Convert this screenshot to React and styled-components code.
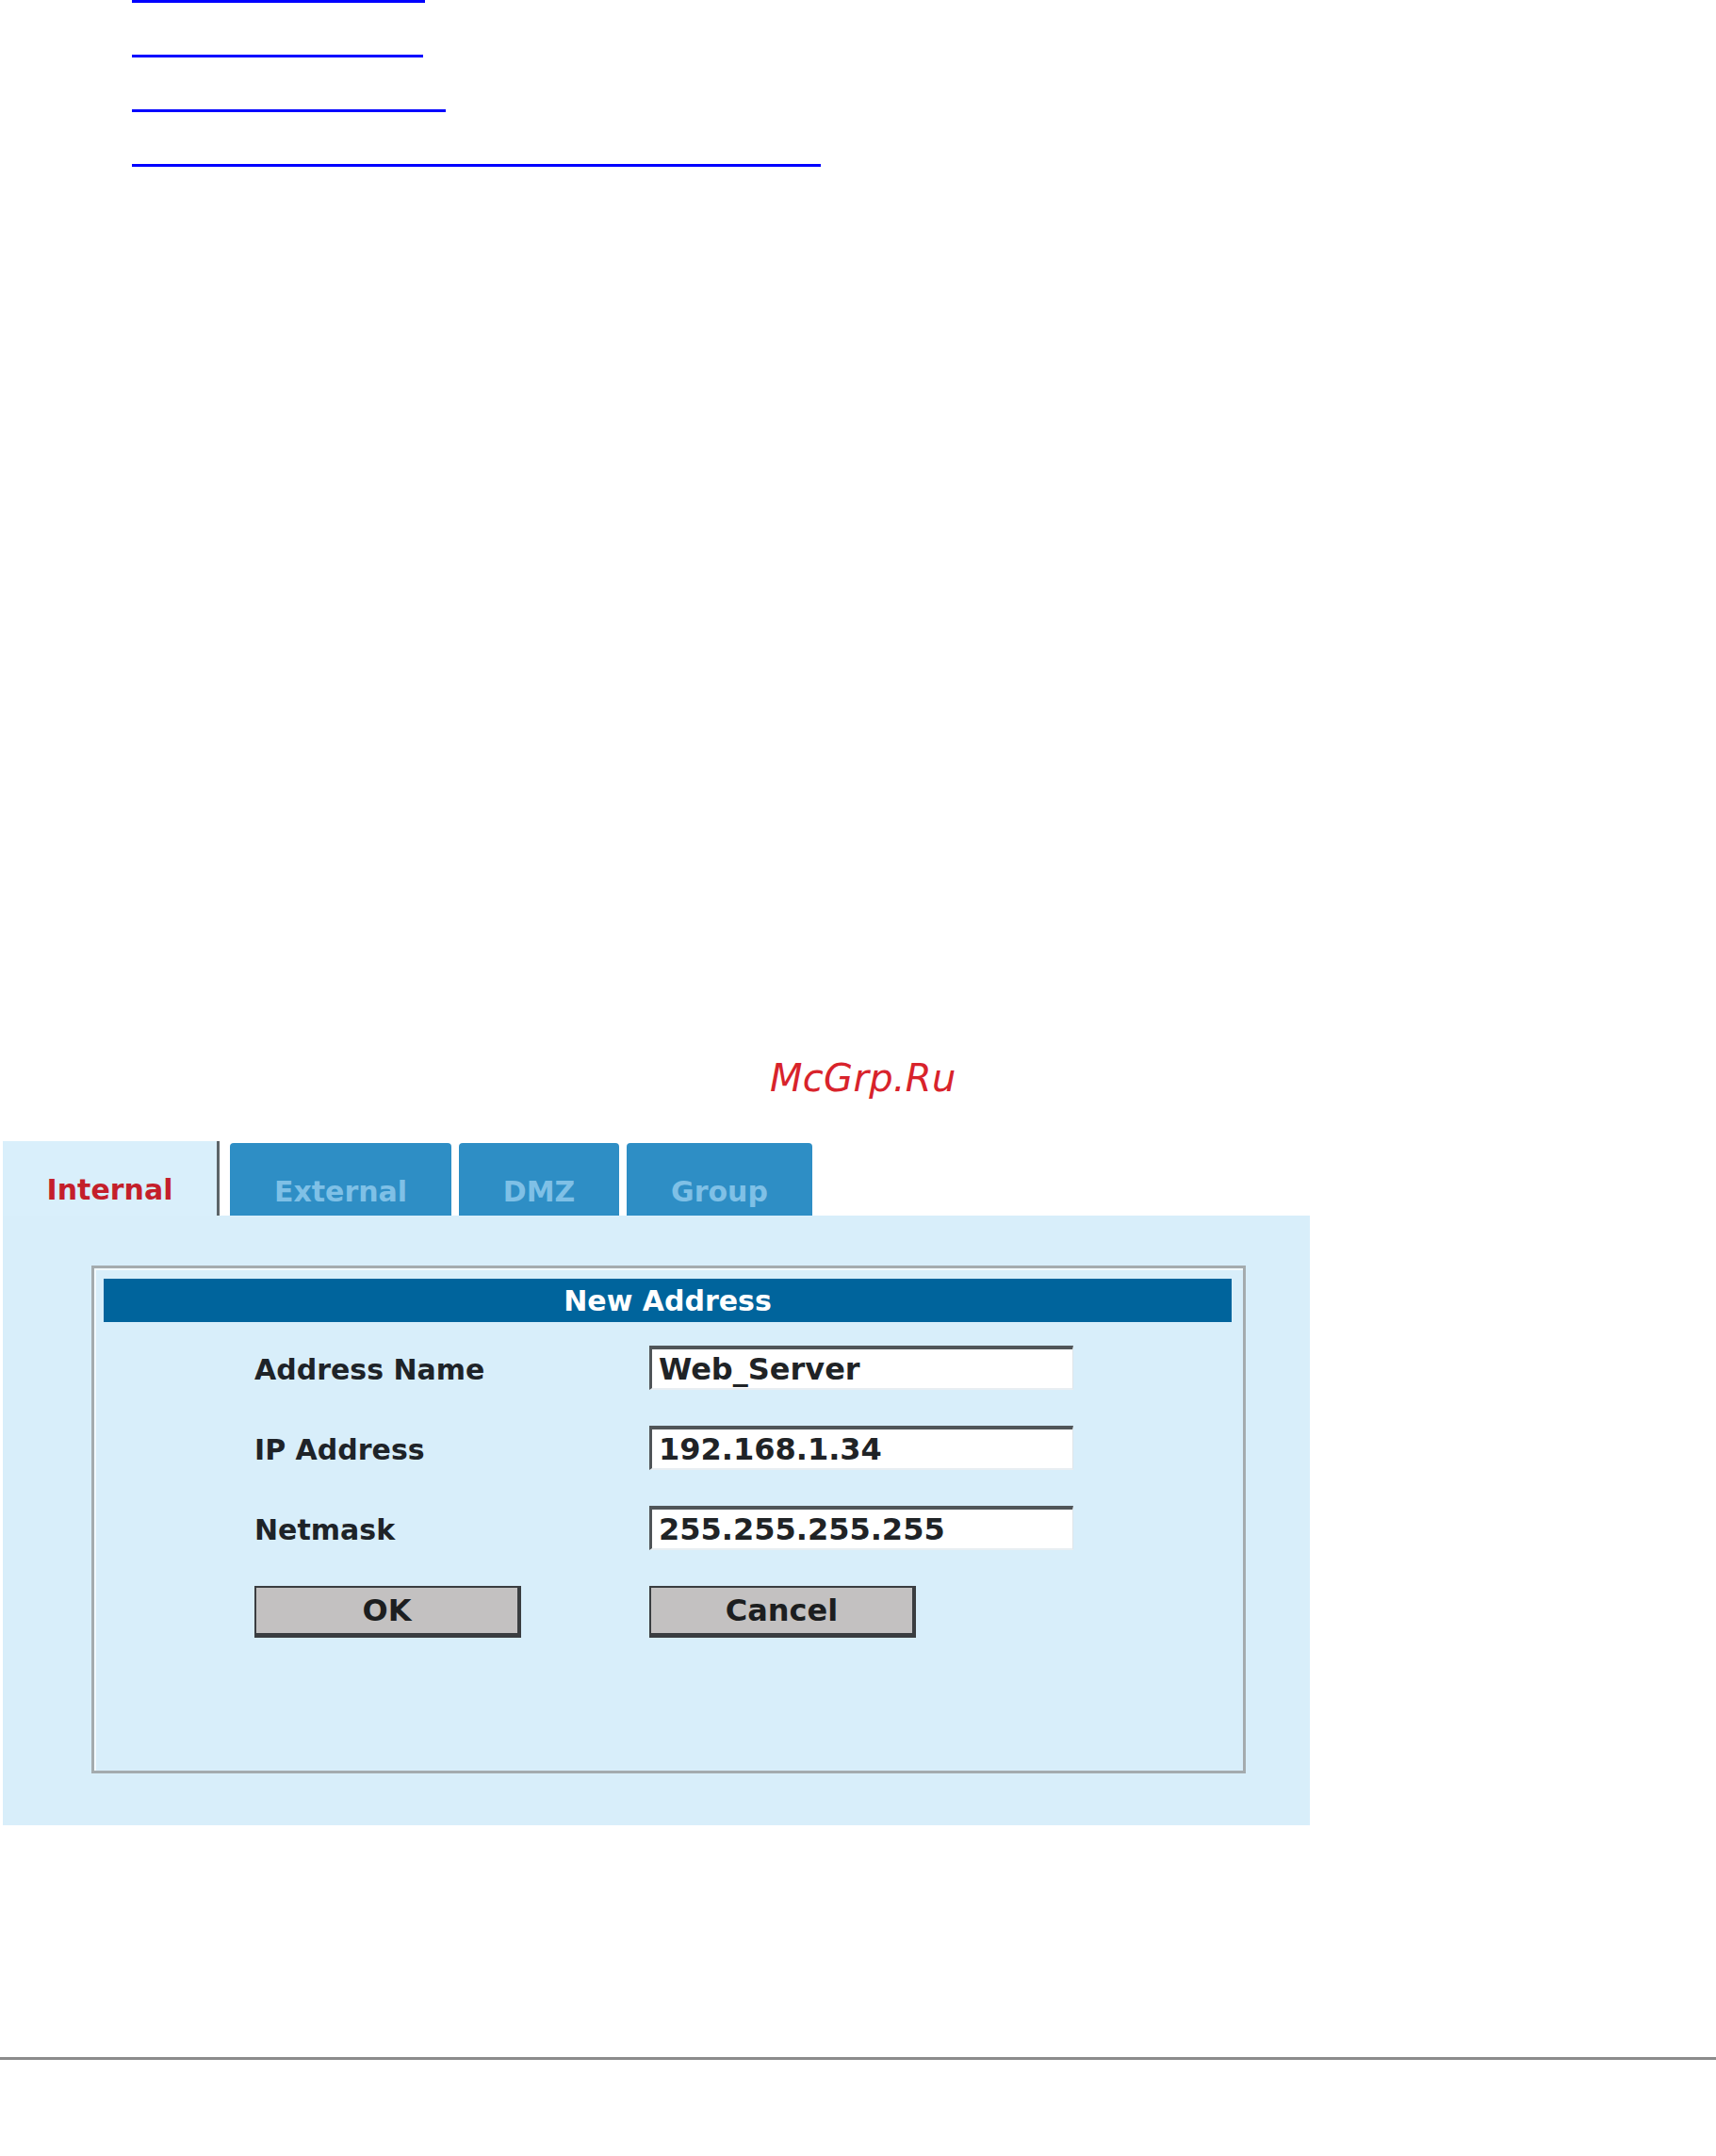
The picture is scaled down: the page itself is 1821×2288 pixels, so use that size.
import styled, { createGlobalStyle } from "styled-components";

const GlobalStyle = createGlobalStyle`
    body {
        margin: 0;
        background: #ffffff;
        font-family: "DejaVu Sans", Verdana, sans-serif;
    }
`;

const links = [
    { href: "#internal", width: 311 },
    { href: "#external", width: 309 },
    { href: "#dmz", width: 333 },
    { href: "#new-address", width: 731 },
];

const tabs = [
    { label: "Internal", width: 230, active: true },
    { label: "External", width: 235, gap: 11 },
    { label: "DMZ", width: 170, gap: 8 },
    { label: "Group", width: 197, gap: 8 },
];

const fields = [
    { label: "Address Name", value: "Web_Server" },
    { label: "IP Address", value: "192.168.1.34" },
    { label: "Netmask", value: "255.255.255.255" },
];

const App = () => {
    return (
        <Page>
            <GlobalStyle />
            <LinkList>
                {links.map((l) => (
                    <NavLink key={l.href} href={l.href} $w={l.width} aria-label={l.href.slice(1)} />
                ))}
            </LinkList>

            <Watermark>McGrp.Ru</Watermark>

            <TabPanel>
                <TabRow>
                    {tabs.map((t) => (
                        <Tab key={t.label} $active={t.active} $w={t.width} $gap={t.gap || 0}>
                            {t.label}
                        </Tab>
                    ))}
                </TabRow>
                <PanelBody>
                    <GroupBox>
                        <Header>New Address</Header>
                        <Form>
                            {fields.map((f) => (
                                <Field key={f.label}>
                                    <Label>{f.label}</Label>
                                    <Input readOnly defaultValue={f.value} />
                                </Field>
                            ))}
                            <Field>
                                <Button>OK</Button>
                                <Button>Cancel</Button>
                            </Field>
                        </Form>
                    </GroupBox>
                </PanelBody>
            </TabPanel>

            <Rule />
        </Page>
    );
}

const Page = styled.div`
    width: 1821px;
    min-height: 2288px;
    overflow: hidden;
`;

const LinkList = styled.div`
    display: flex;
    flex-direction: column;
    align-items: flex-start;
    gap: 55px;
    padding-left: 140px;
`;

const NavLink = styled.a`
    display: block;
    width: ${(p) => p.$w}px;
    height: 0;
    border-bottom: 3px solid #0000ff;
`;

const Watermark = styled.div`
    margin-top: 947px;
    padding-left: 817px;
    font-size: 40px;
    line-height: 40px;
    font-style: italic;
    color: #d8232b;
    letter-spacing: 0.3px;
`;

const TabPanel = styled.div`
    margin-top: 47px;
    margin-left: 3px;
    width: 1387px;
`;

const TabRow = styled.div`
    display: flex;
    height: 79px;
`;

const Tab = styled.div`
    box-sizing: border-box;
    width: ${(p) => p.$w}px;
    margin-left: ${(p) => p.$gap}px;
    display: flex;
    justify-content: center;
    padding-top: 24px;
    font-size: 30px;
    line-height: 55px;
    font-weight: bold;
    background: ${(p) => (p.$active ? "#d9effb" : "#2e8ec5")};
    color: ${(p) => (p.$active ? "#c41f2b" : "#7fc0e6")};
    border-right: ${(p) => (p.$active ? "3px solid #5c6468" : "none")};
    border-radius: ${(p) => (p.$active ? "0" : "4px 4px 0 0")};
    margin-top: ${(p) => (p.$active ? "0" : "2px")};
`;

const PanelBody = styled.div`
    box-sizing: border-box;
    height: 647px;
    background: #d8eefa;
    padding: 53px 68px 0 94px;
`;

const GroupBox = styled.div`
    box-sizing: border-box;
    height: 539px;
    border: 3px solid #a4abae;
    box-shadow: inset 2px 2px 0 #f2faff;
    padding: 11px 12px 0 10px;
`;

const Header = styled.div`
    height: 46px;
    background: #00649c;
    color: #ffffff;
    font-size: 30px;
    font-weight: bold;
    display: flex;
    align-items: center;
    justify-content: center;
`;

const Form = styled.div`
    display: flex;
    flex-direction: column;
    gap: 38px;
    margin-top: 25px;
    padding-left: 160px;
`;

const Field = styled.div`
    display: grid;
    grid-template-columns: 419px 450px;
    align-items: center;
`;

const Label = styled.span`
    font-size: 30px;
    font-weight: bold;
    color: #1e2328;
    padding-top: 4px;
`;

const Input = styled.input`
    box-sizing: border-box;
    width: 450px;
    height: 47px;
    margin: 0;
    padding: 0 7px;
    background: #ffffff;
    border-top: 4px solid #505558;
    border-left: 3px solid #505558;
    border-right: 1px solid #dfe6ea;
    border-bottom: 2px solid #e8eef2;
    font-family: "DejaVu Sans", Verdana, sans-serif;
    font-size: 32px;
    font-weight: bold;
    color: #202326;
    outline: none;
`;

const Button = styled.button`
    box-sizing: border-box;
    width: 283px;
    height: 55px;
    margin: 0;
    padding: 0;
    background: #c3c1c1;
    border: 2px solid #3a3d40;
    border-right-width: 4px;
    border-bottom-width: 5px;
    font-family: "DejaVu Sans", Verdana, sans-serif;
    font-size: 32px;
    font-weight: bold;
    color: #1c1e20;
`;

const Rule = styled.div`
    margin-top: 246px;
    height: 3px;
    background: #8b8b8b;
`;

export default App;
